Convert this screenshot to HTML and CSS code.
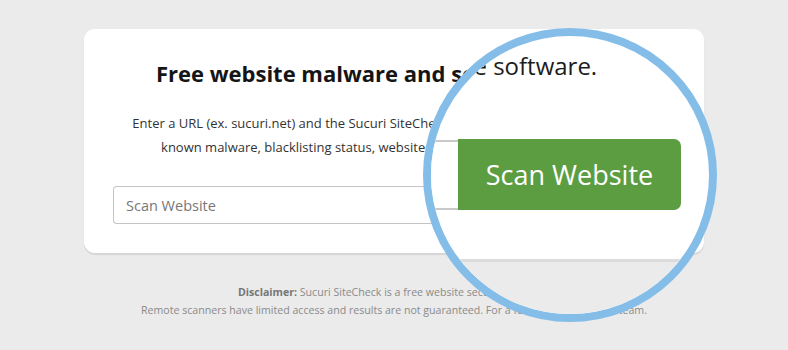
FILE: index.html
```html
<!DOCTYPE html>
<html lang="en">
<head>
<meta charset="utf-8">
<title>Sucuri SiteCheck</title>
<link rel="stylesheet" href="styles.css">
</head>
<body>
<main class="page">
  <section class="card">
    <h1 class="title">Free website malware and security checker</h1>
    <p class="lead"><span class="line">Enter a URL (ex. sucuri.net) and the Sucuri SiteCheck scanner will check the website for</span><span class="line">known malware, blacklisting status, website errors, and out-of-date software.</span></p>
    <form class="scan-form">
      <input class="scan-input" type="text" placeholder="Scan Website">
      <button class="scan-btn" type="button">Scan Website</button>
    </form>
  </section>
  <p class="disclaimer"><b>Disclaimer:</b> Sucuri SiteCheck is a free website security scanner.<br>Remote scanners have limited access and results are not guaranteed. For a full scan, contact our team.</p>

  <div class="lens" aria-hidden="true">
    <div class="lens-text">se software.</div>
    <div class="lens-input"></div>
    <div class="lens-btn">Scan Website</div>
    <div class="lens-floor"></div>
  </div>
</main>
</body>
</html>
```

FILE: styles.css
```css
* { box-sizing: border-box; }
html, body { margin: 0; padding: 0; }
body {
  background: #ebebeb;
  font-family: "Open Sans", "Noto Sans", sans-serif;
  width: 788px;
  height: 350px;
  overflow: hidden;
}
.page {
  position: relative;
  width: 788px;
  height: 350px;
  padding-top: 29px;
}
.card {
  width: 620px;
  margin: 0 auto;
  background: #fff;
  border-radius: 11px;
  box-shadow: 0 2px 1px rgba(0,0,0,0.09);
  padding: 29px 29px 29px;
  text-align: center;
}
.title {
  margin: 0;
  font-size: 22px;
  line-height: 30px;
  font-weight: 700;
  color: #151515;
}
.lead {
  margin: 23px -29px 0;
  font-size: 13px;
  line-height: 24px;
  color: #333;
}
.lead .line {
  display: block;
  white-space: nowrap;
}
.scan-form {
  display: flex;
  margin-top: 27px;
  height: 38px;
}
.scan-input {
  flex: 1;
  height: 38px;
  border: 1px solid #c4c4c4;
  border-right: none;
  border-radius: 4px 0 0 4px;
  padding: 0 12px;
  font-family: inherit;
  font-size: 14.5px;
  color: #555;
  background: #fff;
  outline: none;
}
.scan-input::placeholder { color: #777; }
.scan-btn {
  width: 124px;
  height: 38px;
  border: none;
  border-radius: 0 4px 4px 0;
  background: #5d9d42;
  color: #fff;
  font-family: inherit;
  font-size: 14px;
}
.disclaimer {
  margin: 30px 0 0;
  text-align: center;
  font-size: 10.6px;
  line-height: 18px;
  color: #8a8a8a;
}
.disclaimer b { color: #767676; font-weight: 700; }

/* magnifier overlay */
.lens {
  position: absolute;
  left: 423px;
  top: 28px;
  width: 294px;
  height: 294px;
  border-radius: 50%;
  border: 8px solid #85bde9;
  background: #fff;
  overflow: hidden;
}
.lens-text {
  position: absolute;
  left: 31px;
  top: 18px;
  font-size: 24px;
  line-height: 24px;
  color: #1c1c1c;
  white-space: nowrap;
}
.lens-input {
  position: absolute;
  left: -100px;
  top: 104px;
  width: 127px;
  height: 70px;
  border: 2px solid #c9c9c9;
  border-right: none;
  background: #fff;
}
.lens-btn {
  position: absolute;
  left: 27px;
  top: 103px;
  width: 223px;
  height: 71px;
  background: #5d9d42;
  border-radius: 0 7px 7px 0;
  color: #fff;
  font-size: 27px;
  display: flex;
  align-items: center;
  justify-content: center;
}
.lens-floor {
  position: absolute;
  left: 0;
  right: 0;
  top: 223px;
  bottom: 0;
  background: #ebebeb;
  border-top: 3px solid #dcdcdc;
}
```
